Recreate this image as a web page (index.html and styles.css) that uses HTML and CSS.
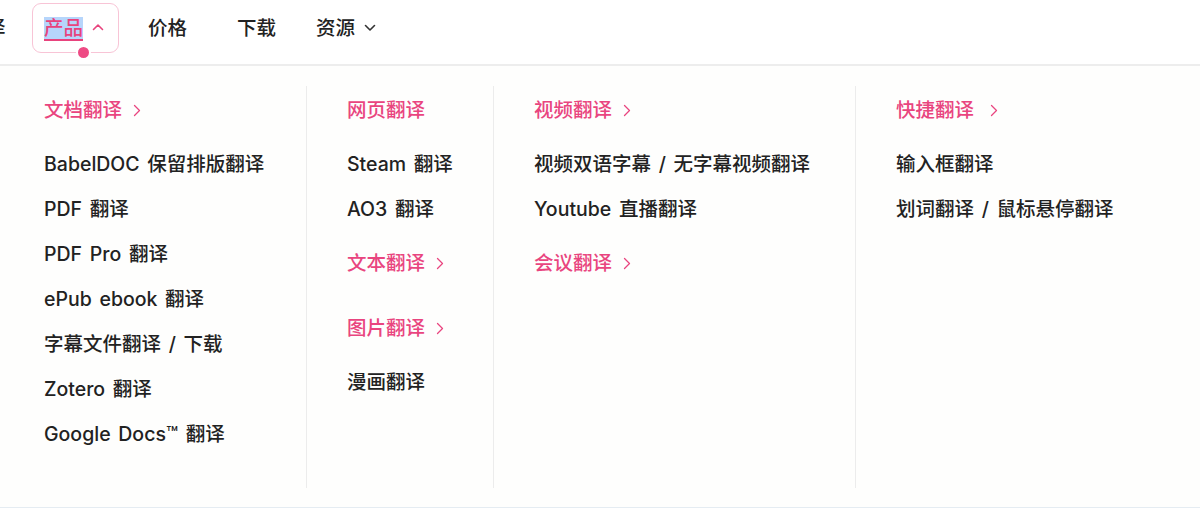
FILE: index.html
```html
<!DOCTYPE html>
<html lang="zh-CN">
<head>
<meta charset="utf-8">
<title>产品菜单</title>
<link rel="stylesheet" href="styles.css">
</head>
<body>
<header class="topbar">
  <nav class="nav">
    <span class="nav-item cut">译</span>
    <span class="nav-item active">
      <span class="sel">产品</span>
      <svg class="chev" width="12" height="8" viewBox="0 0 12 8"><path d="M1.5 6.5 L6 2 L10.5 6.5" fill="none" stroke="currentColor" stroke-width="1.6" stroke-linecap="round" stroke-linejoin="round"/></svg>
      <span class="dot"></span>
    </span>
    <span class="nav-item price">价格</span>
    <span class="nav-item dl">下载</span>
    <span class="nav-item res">资源
      <svg class="chev" width="12" height="8" viewBox="0 0 12 8"><path d="M1.5 1.5 L6 6 L10.5 1.5" fill="none" stroke="currentColor" stroke-width="1.6" stroke-linecap="round" stroke-linejoin="round"/></svg>
    </span>
  </nav>
</header>

<section class="panel">
  <div class="col col1">
    <div class="group">
      <div class="head">文档翻译<svg class="arrow" width="8" height="13" viewBox="0 0 8 13"><path d="M1.5 1.5 L6.5 6.5 L1.5 11.5" fill="none" stroke="currentColor" stroke-width="1.3" stroke-linecap="round" stroke-linejoin="round"/></svg></div>
      <ul class="list">
        <li>BabelDOC 保留排版翻译</li>
        <li>PDF 翻译</li>
        <li>PDF Pro 翻译</li>
        <li>ePub ebook 翻译</li>
        <li>字幕文件翻译 / 下载</li>
        <li>Zotero 翻译</li>
        <li>Google Docs™ 翻译</li>
      </ul>
    </div>
  </div>

  <div class="col col2">
    <div class="group">
      <div class="head">网页翻译</div>
      <ul class="list">
        <li>Steam 翻译</li>
        <li>AO3 翻译</li>
      </ul>
    </div>
    <div class="group">
      <div class="head">文本翻译<svg class="arrow" width="8" height="13" viewBox="0 0 8 13"><path d="M1.5 1.5 L6.5 6.5 L1.5 11.5" fill="none" stroke="currentColor" stroke-width="1.3" stroke-linecap="round" stroke-linejoin="round"/></svg></div>
    </div>
    <div class="group">
      <div class="head">图片翻译<svg class="arrow" width="8" height="13" viewBox="0 0 8 13"><path d="M1.5 1.5 L6.5 6.5 L1.5 11.5" fill="none" stroke="currentColor" stroke-width="1.3" stroke-linecap="round" stroke-linejoin="round"/></svg></div>
      <ul class="list">
        <li>漫画翻译</li>
      </ul>
    </div>
  </div>

  <div class="col col3">
    <div class="group">
      <div class="head">视频翻译<svg class="arrow" width="8" height="13" viewBox="0 0 8 13"><path d="M1.5 1.5 L6.5 6.5 L1.5 11.5" fill="none" stroke="currentColor" stroke-width="1.3" stroke-linecap="round" stroke-linejoin="round"/></svg></div>
      <ul class="list">
        <li>视频双语字幕 / 无字幕视频翻译</li>
        <li>Youtube 直播翻译</li>
      </ul>
    </div>
    <div class="group">
      <div class="head">会议翻译<svg class="arrow" width="8" height="13" viewBox="0 0 8 13"><path d="M1.5 1.5 L6.5 6.5 L1.5 11.5" fill="none" stroke="currentColor" stroke-width="1.3" stroke-linecap="round" stroke-linejoin="round"/></svg></div>
    </div>
  </div>

  <div class="col col4">
    <div class="group">
      <div class="head wide">快捷翻译<svg class="arrow" width="8" height="13" viewBox="0 0 8 13"><path d="M1.5 1.5 L6.5 6.5 L1.5 11.5" fill="none" stroke="currentColor" stroke-width="1.3" stroke-linecap="round" stroke-linejoin="round"/></svg></div>
      <ul class="list">
        <li>输入框翻译</li>
        <li>划词翻译 / 鼠标悬停翻译</li>
      </ul>
    </div>
  </div>
</section>
</body>
</html>
```

FILE: styles.css
```css
* { box-sizing: border-box; }

html, body {
  margin: 0;
  padding: 0;
  background: #ffffff;
  overflow: hidden;
}

body {
  width: 1200px;
  height: 508px;
  font-family: Inter, "Noto Sans CJK SC", sans-serif;
  color: #222222;
}

.topbar {
  height: 66px;
  border-bottom: 2px solid #ededed;
  overflow: hidden;
}

.nav {
  display: flex;
  align-items: center;
  height: 50px;
  margin-top: 3px;
  font-size: 19.5px;
  line-height: 28px;
  font-weight: 500;
}

.nav-item {
  display: inline-flex;
  align-items: center;
  white-space: nowrap;
}

.cut {
  margin-left: -14px;
  width: 20px;
}

.active {
  position: relative;
  margin-left: 26px;
  height: 50px;
  width: 87px;
  padding-left: 11px;
  border: 1.5px solid #f8c4d6;
  border-radius: 9px;
  color: #e8437d;
}

.sel {
  background: #b6d5fb;
  border-bottom: 2px solid #e8437d;
  line-height: 22px;
  margin-top: 2px;
}

.active .chev {
  margin-left: 9px;
  margin-top: -2px;
}

.dot {
  position: absolute;
  left: 43px;
  bottom: -8px;
  width: 15px;
  height: 15px;
  border-radius: 50%;
  background: #ee4a84;
  border: 2px solid #ffffff;
}

.price { margin-left: 29px; }
.dl { margin-left: 50px; }
.res { margin-left: 40px; }

.res .chev {
  margin-left: 9px;
  color: #333;
}

.panel {
  display: flex;
  height: 442px;
  padding: 20px 0 19px;
  border-bottom: 1px solid #e5ecf2;
  background: #fefefd;
}

.col {
  padding-top: 10px;
  display: flex;
  flex-direction: column;
  gap: 26px;
}

.col1 { width: 306px; padding-left: 44px; }
.col2 { width: 187px; padding-left: 40px; border-left: 1px solid #ececec; }
.col3 { width: 362px; padding-left: 40px; border-left: 1px solid #ececec; }
.col4 { flex: 1; padding-left: 40px; border-left: 1px solid #ececec; }

.head {
  display: flex;
  align-items: center;
  font-size: 19.5px;
  line-height: 28px;
  font-weight: 500;
  padding-bottom: 11px;
  color: #e9457f;
  white-space: nowrap;
}

.arrow {
  margin-left: 11px;
  margin-top: 1px;
}

.head.wide .arrow { margin-left: 16px; }

.list {
  list-style: none;
  margin: 15px 0 0;
  padding: 0;
  display: flex;
  flex-direction: column;
  gap: 17px;
}

.list li {
  font-size: 19.5px;
  line-height: 28px;
  font-weight: 500;
  word-spacing: 2.5px;
  color: #222222;
  white-space: nowrap;
}
```
